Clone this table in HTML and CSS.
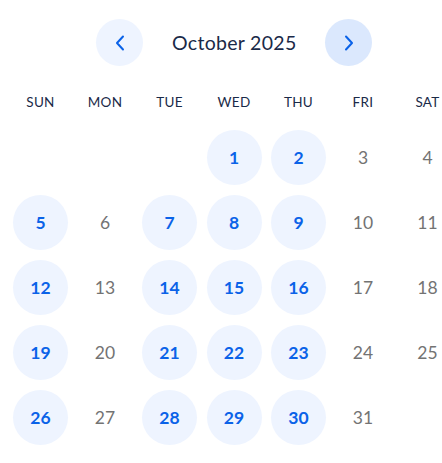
FILE: index.html
```html
<!DOCTYPE html>
<html lang="en">
<head>
<meta charset="utf-8">
<title>Calendar</title>
<link rel="stylesheet" href="styles.css">
</head>
<body>
<div class="calendar">
  <div class="cal-header">
    <button class="nav-btn prev" aria-label="Previous month">
      <svg width="10" height="16" viewBox="0 0 10 16"><path d="M8 1.5 2 8l6 6.5" fill="none" stroke="#0a62e8" stroke-width="2" stroke-linecap="round" stroke-linejoin="round"/></svg>
    </button>
    <div class="title">October 2025</div>
    <button class="nav-btn next" aria-label="Next month">
      <svg width="10" height="16" viewBox="0 0 10 16"><path d="M2 1.5 8 8l-6 6.5" fill="none" stroke="#0a62e8" stroke-width="2" stroke-linecap="round" stroke-linejoin="round"/></svg>
    </button>
  </div>
  <div class="weekdays">
    <div>SUN</div><div>MON</div><div>TUE</div><div>WED</div><div>THU</div><div>FRI</div><div>SAT</div>
  </div>
  <div class="days">
    <div class="day empty"></div>
    <div class="day empty"></div>
    <div class="day empty"></div>
    <div class="day avail">1</div>
    <div class="day avail">2</div>
    <div class="day">3</div>
    <div class="day">4</div>
    <div class="day avail">5</div>
    <div class="day">6</div>
    <div class="day avail">7</div>
    <div class="day avail">8</div>
    <div class="day avail">9</div>
    <div class="day">10</div>
    <div class="day">11</div>
    <div class="day avail">12</div>
    <div class="day">13</div>
    <div class="day avail">14</div>
    <div class="day avail">15</div>
    <div class="day avail">16</div>
    <div class="day">17</div>
    <div class="day">18</div>
    <div class="day avail">19</div>
    <div class="day">20</div>
    <div class="day avail">21</div>
    <div class="day avail">22</div>
    <div class="day avail">23</div>
    <div class="day">24</div>
    <div class="day">25</div>
    <div class="day avail">26</div>
    <div class="day">27</div>
    <div class="day avail">28</div>
    <div class="day avail">29</div>
    <div class="day avail">30</div>
    <div class="day">31</div>
  </div>
</div>
</body>
</html>
```
FILE: styles.css
```css
html, body {
  margin: 0;
  padding: 0;
  background: #ffffff;
  overflow: hidden;
}
body {
  font-family: Lato, "Liberation Sans", sans-serif;
}
.calendar {
  width: 442px;
  margin-left: 13px;
  padding-top: 19px;
}
.cal-header {
  display: flex;
  align-items: center;
  justify-content: center;
  gap: 29px;
  height: 47px;
}
.nav-btn {
  width: 47px;
  height: 47px;
  border-radius: 50%;
  border: none;
  padding: 0;
  display: flex;
  align-items: center;
  justify-content: center;
  cursor: pointer;
}
.nav-btn.prev { background: #eef4ff; }
.nav-btn.next { background: #dbe8fd; }
.title {
  width: 124px;
  text-align: center;
  font-size: 19.5px;
  letter-spacing: 0.3px;
  color: #1a2a48;
  white-space: nowrap;
}
.weekdays {
  display: grid;
  grid-template-columns: repeat(7, 55px);
  column-gap: 9.5px;
  margin-top: 26px;
  height: 20px;
  line-height: 20px;
  font-size: 13.5px;
  letter-spacing: 0.3px;
  color: #1a2a48;
  text-align: center;
}
.days {
  display: grid;
  grid-template-columns: repeat(7, 55px);
  grid-auto-rows: 55px;
  column-gap: 9.5px;
  row-gap: 10px;
  margin-top: 18px;
}
.day {
  display: flex;
  align-items: center;
  justify-content: center;
  border-radius: 50%;
  font-size: 17.5px;
  color: #737373;
}
.day.avail {
  background: #eef4ff;
  color: #0a62e8;
  font-weight: 700;
}
```
